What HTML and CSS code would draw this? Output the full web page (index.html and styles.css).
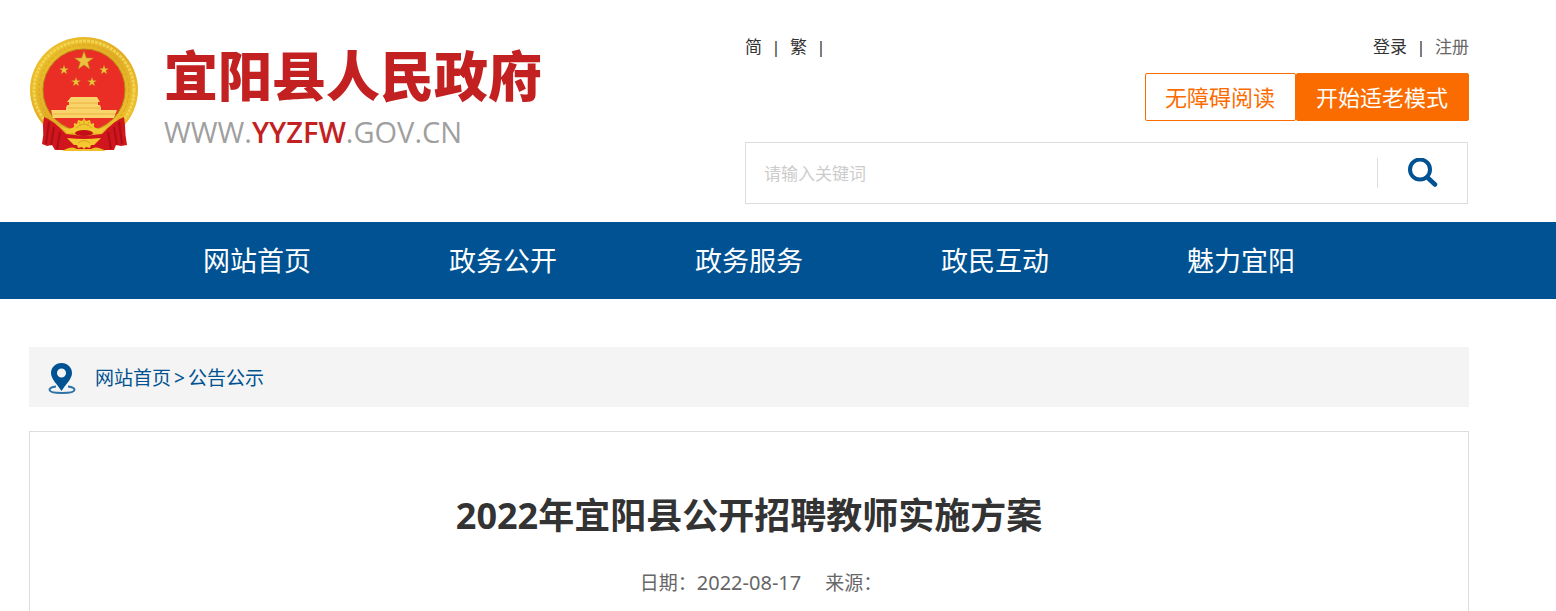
FILE: index.html
```
<!DOCTYPE html>
<html lang="zh-CN">
<head>
    <meta charset="utf-8">
    <title>2022年宜阳县公开招聘教师实施方案</title>
    <link rel="stylesheet" href="styles.css">
</head>
<body>
    <header class="header wrap">
        <a class="logo" href="#">
            <svg class="emblem" viewBox="0 0 110 116" aria-hidden="true">
                <defs>
                    <linearGradient id="gold" x1="0" y1="0" x2="1" y2="1">
                        <stop offset="0" stop-color="#f0c62c"/>
                        <stop offset="0.5" stop-color="#e0ac24"/>
                        <stop offset="1" stop-color="#f2c830"/>
                    </linearGradient>
                    <path id="star" d="M0-10 2.4-3.1 9.5-3.1 3.8 1.2 5.9 8.1 0 4-5.9 8.1-3.8 1.2-9.5-3.1-2.4-3.1z"/>
                </defs>
                <ellipse cx="55" cy="54" rx="54" ry="53" fill="url(#gold)"/>
                <ellipse cx="55" cy="54" rx="50" ry="49" fill="none" stroke="#f3d452" stroke-width="3" stroke-dasharray="3 1"/>
                <ellipse cx="55" cy="54" rx="45" ry="45" fill="none" stroke="#d9a526" stroke-width="1" stroke-dasharray="3 2"/>
                <circle cx="55" cy="54" r="41" fill="#ea2d25" stroke="#b98217"/>
                <g fill="#ecc23c" stroke="#b87a1c" stroke-width="0.6">
                    <use href="#star" transform="translate(55 25)"/>
                    <use href="#star" transform="translate(35 34) scale(.5)"/>
                    <use href="#star" transform="translate(75 34) scale(.5)"/>
                    <use href="#star" transform="translate(47 46) scale(.48)"/>
                    <use href="#star" transform="translate(63 46) scale(.48)"/>
                </g>
                <path d="M42 61h26l3 5h-2v3h2l1 3v4H37v-4l1-3h2v-3h-2zM22 74h16v1h34v-1h16l-3 8H24z" fill="#f8d46a"/>
                <path d="M41 67h28M39 72h32M24 78h62" stroke="#eeb242" stroke-width="1"/>
                <path d="M15 81q9 3 22 17l18 2 18-2q13-14 22-17l1 8q0 10 2 20l-6 1-5-1-2 5H26l-3-5-5 1-5-2q2-9 1-19z" fill="#d0161c"/>
                <path d="M20 86l-3 22M25 91l-3 18M31 96l-3 17M90 86l3 22M85 91l3 18M79 96l3 17" stroke="#a80f17" stroke-width="2"/>
                <path d="M31 90q9 5 14 1v-4l3 1 1-4 4 1 2-3 2 3 4-1 1 4 3-1v4q5 4 14-1l-7 7q-9 1-17-2-8 3-17 2z" fill="#f1c82e"/>
                <path d="M47 92q8-8 16 0M55 84v5M50 86l2 4M60 86l-2 4" fill="none" stroke="#dba62a"/>
                <ellipse cx="55" cy="97" rx="9" ry="3" fill="#c40f18"/>
                <path d="M38 102q10 1 17 1t17-1l-7 7-3 0-1 3-4-1-2 2-2-2-4 1-1-3-3 0z" fill="#f4c82e"/>
                <path d="M49 107q6-5 12 0" fill="none" stroke="#d9a126"/>
                <path d="M33 115q10-6 15-2h14q5-4 15 2z" fill="#efc02c"/>
            </svg>
            <span class="logo-text">
                <strong class="logo-name">宜阳县人民政府</strong>
                <span class="logo-url">WWW.<em>YYZFW</em>.GOV.CN</span>
            </span>
        </a>
        <div class="tools">
            <div class="links">
                <div><a href="#">简</a><span class="sep">|</span><a href="#">繁</a><span class="sep">|</span></div>
                <div><a href="#">登录</a><span class="sep">|</span><a class="reg" href="#">注册</a></div>
            </div>
            <div class="modes">
                <button class="mode" type="button">无障碍阅读</button>
                <button class="mode mode-old" type="button">开始适老模式</button>
            </div>
            <form class="search">
                <input type="text" placeholder="请输入关键词" aria-label="请输入关键词">
                <button type="submit" aria-label="搜索">
                    <svg viewBox="0 0 30 30" width="30" height="30">
                        <circle cx="12" cy="11.5" r="10" fill="none" stroke="#005293" stroke-width="4"/>
                        <path d="M20 20 27 26.5" stroke="#005293" stroke-width="4.5" stroke-linecap="round"/>
                    </svg>
                </button>
            </form>
        </div>
    </header>

    <nav class="nav">
        <ul class="wrap">
            <li><a href="#">网站首页</a></li>
            <li><a href="#">政务公开</a></li>
            <li><a href="#">政务服务</a></li>
            <li><a href="#">政民互动</a></li>
            <li><a href="#">魅力宜阳</a></li>
        </ul>
    </nav>

    <main class="wrap">
        <div class="crumb">
            <svg viewBox="0 -3 28 34" width="28" height="34" aria-hidden="true">
                <path d="M8 23.5C4 24 1.500 25.300 1.500 26.800c0 2 5 3.200 12.500 3.200s12.500-1.200 12.500-3.200c0-1.500-2.500-2.800-6.500-3.300" fill="none" stroke="#2f72a5" stroke-width="2"/>
                <path fill-rule="evenodd" d="M13.500 0C7.500 0 3 4.500 3 10c0 6 6 11 10.500 18C18 21 24 16 24 10 24 4.500 19.500 0 13.500 0zM13.500 5.500a4.500 4.500 0 1 1 0 9 4.500 4.500 0 0 1 0-9z" fill="#005293"/>
            </svg>
            <div><a href="#">网站首页</a><span class="arrow">&gt;</span><a href="#">公告公示</a></div>
        </div>
        <article class="article">
            <h1>2022年宜阳县公开招聘教师实施方案</h1>
            <p class="info"><span>日期：<time>2022-08-17</time></span><span>来源：</span></p>
        </article>
    </main>
</body>
</html>
```
FILE: styles.css
```
* {
    margin: 0;
    padding: 0;
    box-sizing: border-box;
}

body {
    background-color: #fff;
    color: #333;
    font-family: "Noto Sans", "Noto Sans CJK SC", sans-serif;
    font-size: 17px;
}

a {
    color: inherit;
    text-decoration: none;
}

button,
input {
    font-family: inherit;
}

.wrap {
    margin: 0 87px 0 29px;
}

/* header */
.header {
    display: flex;
    justify-content: space-between;
    height: 222px;
    padding-top: 36px;
}

.logo {
    display: flex;
    align-items: flex-start;
    gap: 25px;
}

.emblem {
    width: 110px;
    height: 116px;
}

.logo-text {
    display: flex;
    flex-direction: column;
    padding-top: 6px;
}

.logo-name {
    color: #c32121;
    font-size: 54px;
    font-weight: 900;
    line-height: 68px;
}

.logo-url {
    color: #9f9f9f;
    font-family: "Open Sans", sans-serif;
    font-size: 29px;
    line-height: 44px;
}

.logo-url em {
    color: #c32121;
    font-style: normal;
    font-weight: 600;
}

.tools {
    width: 724px;
}

.links {
    display: flex;
    justify-content: space-between;
    line-height: 22px;
}

.links div {
    display: flex;
}

.links .sep {
    width: 28px;
    text-align: center;
}

.links .reg {
    color: #666;
}

.modes {
    display: flex;
    justify-content: flex-end;
    margin-top: 15px;
}

.mode {
    height: 48px;
    padding: 0 20px 2px 19px;
    border: 1px solid #fb6c00;
    border-radius: 2px;
    background-color: #fff;
    color: #fb6c00;
    font-size: 22px;
}

.mode-old {
    background-color: #fb6c00;
    color: #fff;
}

.search {
    display: flex;
    align-items: center;
    height: 62px;
    margin: 21px 1px 0 0;
    border: 1px solid #ddd;
}

.search input {
    flex: 1;
    height: 60px;
    padding-left: 18px;
    border: 0;
    outline: none;
    font-size: 17px;
}

.search input::placeholder {
    color: #ccc;
}

.search button {
    display: flex;
    justify-content: center;
    width: 90px;
    height: 30px;
    border: 0;
    border-left: 1px solid #ddd;
    background: none;
}

/* nav */
.nav {
    background-color: #005293;
}

.nav ul {
    display: flex;
    justify-content: center;
    list-style: none;
}

.nav a {
    display: block;
    padding: 0 69px;
    color: #fff;
    font-size: 27px;
    line-height: 77px;
}

/* content */
.crumb {
    display: flex;
    align-items: center;
    gap: 19px;
    height: 60px;
    margin-top: 48px;
    padding-left: 19px;
    background-color: #f4f4f4;
    color: #005293;
    font-size: 19px;
}

.crumb .arrow {
    margin: 0 3px;
}

.article {
    margin-top: 24px;
    padding: 56px 20px 13px;
    border: 1px solid #ddd;
    border-bottom: 0;
    text-align: center;
}

.article h1 {
    font-size: 36px;
    line-height: 56px;
}

.info {
    margin-top: 24px;
    color: #666;
    font-size: 19px;
    line-height: 30px;
}

.info span {
    margin-left: 24px;
}

.info time {
    font-size: 20px;
}
```
